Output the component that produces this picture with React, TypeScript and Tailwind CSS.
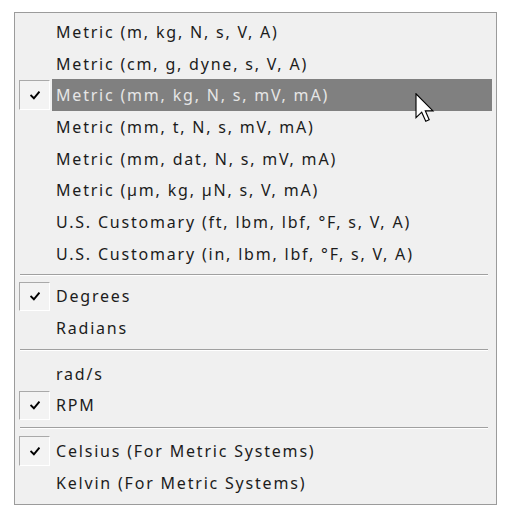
import React from "react";

type Item = { kind: "item"; label: string; checked?: boolean; active?: boolean } | { kind: "sep"; h: number; off: number };

const items: Item[] = [
  { kind: "item", label: "Metric (m, kg, N, s, V, A)" },
  { kind: "item", label: "Metric (cm, g, dyne, s, V, A)" },
  { kind: "item", label: "Metric (mm, kg, N, s, mV, mA)", checked: true, active: true },
  { kind: "item", label: "Metric (mm, t, N, s, mV, mA)" },
  { kind: "item", label: "Metric (mm, dat, N, s, mV, mA)" },
  { kind: "item", label: "Metric (µm, kg, µN, s, V, mA)" },
  { kind: "item", label: "U.S. Customary (ft, lbm, lbf, °F, s, V, A)" },
  { kind: "item", label: "U.S. Customary (in, lbm, lbf, °F, s, V, A)" },
  { kind: "sep", h: 11, off: 4 },
  { kind: "item", label: "Degrees", checked: true },
  { kind: "item", label: "Radians" },
  { kind: "sep", h: 14, off: 5 },
  { kind: "item", label: "rad/s" },
  { kind: "item", label: "RPM", checked: true },
  { kind: "sep", h: 14, off: 6 },
  { kind: "item", label: "Celsius (For Metric Systems)", checked: true },
  { kind: "item", label: "Kelvin (For Metric Systems)" },
];

function Check() {
  return (
    <svg width="10" height="9" viewBox="0 0 10 9" className="block">
      <path d="M1.2 4.6 L3.9 7.3 L8.8 1.4" fill="none" stroke="#000" strokeWidth="2" strokeLinecap="square" />
    </svg>
  );
}

function Cursor() {
  return (
    <svg width="20" height="30" viewBox="0 0 13 20" className="absolute left-[415px] top-[93px]">
      <path
        d="M0.5 0.5 L0.5 16.5 L4.3 12.8 L7 18.8 L9.3 17.8 L6.7 11.9 L11.8 11.9 Z"
        fill="#fff"
        stroke="#000"
        strokeWidth="0.75"
        strokeLinejoin="miter"
      />
    </svg>
  );
}

export default function App() {
  return (
    <div className="relative w-[527px] h-[529px] bg-white" style={{ fontFamily: '"Noto Sans", "Open Sans", sans-serif' }}>
      <div className="absolute left-[14px] top-[12px] w-[483px] h-[493px] bg-[#f0f0f0] border border-[#9b9b9b] pt-[3px] pb-[4px] pl-[4px] pr-[4px] flex flex-col">
        {items.map((it, i) =>
          it.kind === "sep" ? (
            <div key={i} className="shrink-0 flex flex-col" style={{ height: it.h, paddingTop: it.off }}>
              <div className="ml-[1px] mr-[4px] h-px bg-[#a0a0a0]" />
              <div className="ml-[1px] mr-[4px] h-px bg-white" />
            </div>
          ) : (
            <div key={i} className="shrink-0 h-[31.7px] flex items-stretch">
              <div className="w-[33px] shrink-0 py-[1px] pr-[2px]">
                {it.checked ? (
                  <div className="h-full w-full flex items-center justify-center border-t border-l border-[#a9a9a9] border-r-white border-b-white border-r border-b bg-[#f3f3f3]">
                    <Check />
                  </div>
                ) : null}
              </div>
              <div
                className={
                  "flex-1 flex items-center pl-[4px] text-[16px] tracking-[1.8px] whitespace-nowrap " +
                  (it.active ? "bg-[#808080] text-[#e6e6e6]" : "text-[#1c1c1c]")
                }
              >
                {it.label}
              </div>
            </div>
          )
        )}
      </div>
      <Cursor />
    </div>
  );
}
